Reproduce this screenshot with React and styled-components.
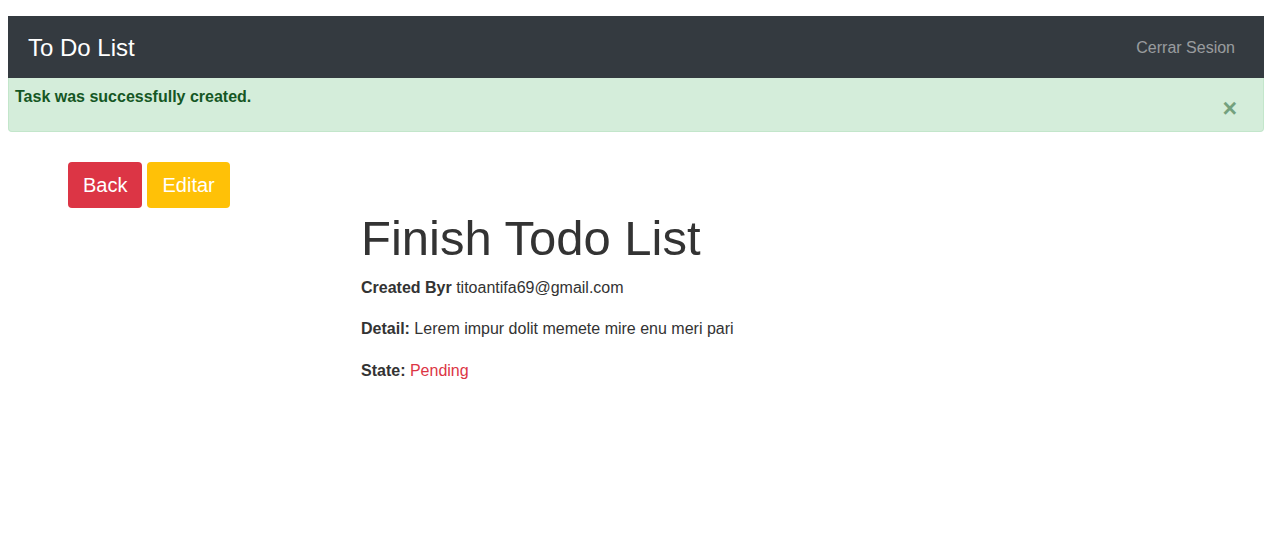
import React from "react";
import styled, { createGlobalStyle } from "styled-components";

const GlobalStyle = createGlobalStyle`
  body {
    margin: 8px;
    font-family: "Liberation Sans", Arial, sans-serif;
    color: #333;
    background: #fff;
  }
`;

const Page = styled.div`
  padding-top: 8px;
  margin-right: 8px;
`;

const Navbar = styled.nav`
  height: 62px;
  padding: 1px 20px 0 20px;
  background: #343a40;
  display: flex;
  align-items: center;
  justify-content: space-between;
  box-sizing: border-box;
`;

const Brand = styled.a`
  font-size: 24px;
  line-height: 30px;
  color: #fff;
  text-decoration: none;
`;

const NavLink = styled.a`
  font-size: 16px;
  line-height: 24px;
  color: rgba(255, 255, 255, 0.5);
  text-decoration: none;
  padding: 0 9px 0 0;
`;

const Alert = styled.div`
  height: 54px;
  box-sizing: border-box;
  display: flex;
  justify-content: space-between;
  padding: 7px 26px 0 6px;
  background: #d4edda;
  border: 1px solid #c3e6cb;
  border-top: none;
  border-radius: 0 0 4px 4px;
  color: #155724;
`;

const AlertText = styled.strong`
  font-size: 16px;
  line-height: 24px;
`;

const Close = styled.button`
  align-self: center;
  padding: 0;
  border: none;
  background: none;
  font-family: "Liberation Sans", Arial, sans-serif;
  font-size: 25px;
  font-weight: bold;
  line-height: 1;
  color: #155724;
  opacity: 0.5;
  cursor: pointer;
`;

const Content = styled.main`
  padding: 30px 0 0 60px;
`;

const Toolbar = styled.div`
  display: flex;
  gap: 5px;
`;

const Button = styled.button`
  padding: 8px 15px;
  border: none;
  border-radius: 4px;
  font-family: "Liberation Sans", Arial, sans-serif;
  font-size: 20px;
  line-height: 30px;
  color: #fff;
  background: ${(p) => (p.$variant === "warning" ? "#ffc107" : "#dc3545")};
  cursor: pointer;
`;

const Details = styled.section`
  margin-left: 293px;
  padding-top: 1px;
`;

const Title = styled.h1`
  margin: 0 0 7px;
  font-size: 49px;
  font-weight: normal;
  line-height: 1.2;
  color: #333;
`;

const Field = styled.p`
  margin: 0 0 16px;
  font-size: 16px;
  line-height: 25.6px;
  color: #333;
`;

const Label = styled.strong`
  font-weight: bold;
`;

const State = styled.span`
  color: #dc3545;
`;

export default function App() {
  return (
    <Page>
      <GlobalStyle />
      <Navbar>
        <Brand href="#">To Do List</Brand>
        <NavLink href="#">Cerrar Sesion</NavLink>
      </Navbar>
      <Alert>
        <AlertText>Task was successfully created.</AlertText>
        <Close aria-label="Close">×</Close>
      </Alert>
      <Content>
        <Toolbar>
          <Button>Back</Button>
          <Button $variant="warning">Editar</Button>
        </Toolbar>
        <Details>
          <Title>Finish Todo List</Title>
          <Field>
            <Label>Created Byr</Label> titoantifa69@gmail.com
          </Field>
          <Field>
            <Label>Detail:</Label> Lerem impur dolit memete mire enu meri pari
          </Field>
          <Field>
            <Label>State:</Label> <State>Pending</State>
          </Field>
        </Details>
      </Content>
    </Page>
  );
}
